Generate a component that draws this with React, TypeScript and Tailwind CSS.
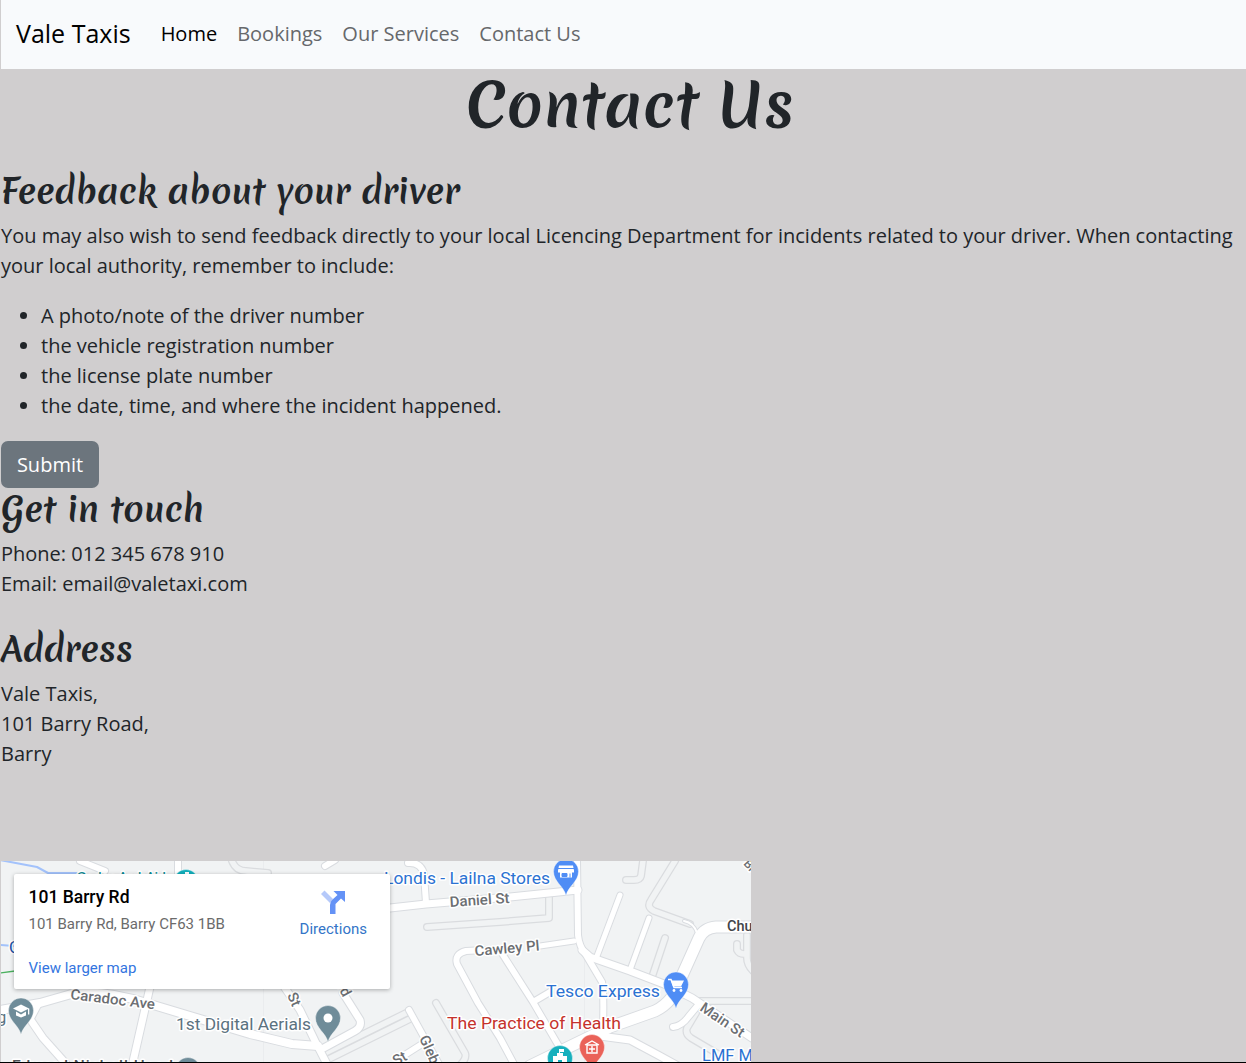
import React from "react";

const navLinks = ["Home", "Bookings", "Our Services", "Contact Us"];

const reminders = [
  "A photo/note of the driver number",
  "the vehicle registration number",
  "the license plate number",
  "the date, time, and where the incident happened.",
];

const lanes = [
  "M427 927L500 922L549 918V897",
  "M675 861L651 900Q646 907 654 911L690 924",
  "M643 861L641 876Q640 880 634 880H626",
  "M665 938L652 977",
  "M700 1001H752",
  "M696 1013L687 1028Q685 1034 691 1038L718 1054",
  "M737 944V950Q739 954 744 954M747 935V958Q747 965 753 971",
  "M325 1053L408 1012M329 1059L410 1019",
  "M436 1003L465 1053Q467 1058 461 1064",
  "M232 861Q236 871 246 871L268 873",
];

const roads: { d: string; w: number }[] = [
  { d: "M0 1010L40 1003L75 993Q108 990 150 1004L200 1019L250 1034L292 1044L318 1046", w: 8 },
  { d: "M38 1004L30 1019L43 1038L68 1066", w: 7 },
  { d: "M150 987L132 1066", w: 7 },
  { d: "M80 861L105 871M178 861V875M325 866L335 860", w: 6 },
  { d: "M408 863Q421 862 424 874L426 903", w: 6 },
  { d: "M390 908L426 904L510 897L578 890", w: 7 },
  { d: "M485 950L466 951Q454 954 457 964L478 1003L500 1038L515 1066", w: 6 },
  { d: "M503 955L533 1002L564 1055M533 1002L550 992", w: 6 },
  { d: "M540 946L574 941", w: 5 },
  { d: "M577 861L578 935Q579 946 586 955L602 982Q604 990 603 1030", w: 6 },
  { d: "M582 950L590 957L630 971L664 984L692 998L752 1038", w: 7 },
  { d: "M620 895L597 956M649 918L630 970", w: 5 },
  { d: "M752 927H716Q704 928 699 938L681 978Q674 1002 655 1011L610 1027L530 1066", w: 11 },
  { d: "M600 1036L630 1040L658 1055L678 1066", w: 7 },
  { d: "M673 1027Q682 1026 689 1016L699 1004", w: 6 },
  { d: "M684 921Q694 923 697 933", w: 2 },
  { d: "M283 985L300 1010L315 1041L328 1066M343 993L360 1020Q362 1027 355 1031L320 1050", w: 7 },
  { d: "M409 1010L440 1066M422 1044L400 1058", w: 6 },
];

function Pin({ x, y, color, children }: { x: number; y: number; color: string; children?: React.ReactNode }) {
  return (
    <g transform={`translate(${x} ${y})`}>
      <path d="M0 24C-2 15-12.500 10-12.500 0A12.500 12.500 0 0 1 12.500 0C12.500 10 2 15 0 24Z" fill={color} stroke="#fff" strokeOpacity=".4" />
      {children}
    </g>
  );
}

function MapDrawing() {
  return (
    <svg viewBox="1 861 750 201" className="block h-[201px] w-[750px]" fontFamily="Roboto, sans-serif">
      <rect x="1" y="861" width="750" height="201" fill="#f1f3f4" />
      <path d="M263.500 861V1062M584.500 950V1062" stroke="#eaecee" fill="none" />
      <g fill="none" strokeLinecap="round" strokeLinejoin="round">
        {lanes.map((d) => <path key={d} d={d} stroke="#dadcdf" strokeWidth="8" />)}
        {lanes.map((d) => <path key={d} d={d} stroke="#f1f3f4" strokeWidth="5.500" />)}
        {roads.map((r) => <path key={r.d} d={r.d} stroke="#d9dce0" strokeWidth={r.w + 2} />)}
        {roads.map((r) => <path key={r.d} d={r.d} stroke="#fff" strokeWidth={r.w} />)}
        <path d="M0 860L37 867L48 873H77M0 945L14 946" stroke="#a3c2fb" strokeWidth="2" />
        <path d="M0 973L15 971" stroke="#4bb15f" strokeWidth="1.300" />
      </g>

      <g stroke="#fff" strokeWidth="3" strokeLinejoin="round" paintOrder="stroke" fontSize="14.500" fill="#6b6e72" fontWeight="500">
        <text x="450" y="907" transform="rotate(-4 450 907)" textLength="60" lengthAdjust="spacingAndGlyphs">Daniel St</text>
        <text x="475" y="956" transform="rotate(-5 475 956)" textLength="65" lengthAdjust="spacingAndGlyphs">Cawley Pl</text>
        <text x="70" y="999" transform="rotate(7 70 999)" textLength="85" lengthAdjust="spacingAndGlyphs">Caradoc Ave</text>
        <text x="699" y="1010" transform="rotate(34 699 1010)" textLength="50" lengthAdjust="spacingAndGlyphs">Main St</text>
        <text x="287" y="995" transform="rotate(67 287 995)">St</text>
        <text x="337" y="986" transform="rotate(62 337 986)">rd</text>
        <text x="419" y="1038" transform="rotate(66 419 1038)">Glebe</text>
        <text x="396" y="1066" transform="rotate(-29 396 1066)">St</text>
        <text x="743" y="864" transform="rotate(48 743 864)" fontSize="12">Br</text>
        <text x="727" y="931" fill="#414448" fontSize="14.500">Church</text>
        <text x="12" y="1071" fill="#505357" fontSize="15.500" textLength="161">Edward Nicholl Head</text>
      </g>
      <g stroke="#fff" strokeWidth="3" strokeLinejoin="round" paintOrder="stroke" fontSize="16.500" fontWeight="400" fill="#2b72d2">
        <text x="384" y="884" textLength="166" lengthAdjust="spacingAndGlyphs">Londis - Lailna Stores</text>
        <text x="546" y="997" textLength="114" lengthAdjust="spacingAndGlyphs">Tesco Express</text>
        <text x="702" y="1061">LMF Motors</text>
        <text x="9" y="953" fill="#174ea6">C</text>
        <text x="76" y="884" fill="#0b8a93" textLength="90">Cadoc ArchAid</text>
        <text x="447" y="1029" fill="#c5322c" textLength="174" lengthAdjust="spacingAndGlyphs">The Practice of Health</text>
        <text x="176" y="1030" fill="#5b7280" textLength="135" lengthAdjust="spacingAndGlyphs">1st Digital Aerials</text>
        <text x="-3" y="1023" fill="#5b7280">g</text>
      </g>

      <Pin x={566} y={871.5} color="#4f8df5">
        <path d="M-7-6H7L8-1V1H-8V-1ZM-6 1V6H6V1" fill="#fff" />
        <path d="M-8-3H8M-4 2H1V5H-4ZM4 2V6" stroke="#4f8df5" strokeWidth="1" fill="#4f8df5" />
      </Pin>
      <Pin x={676} y={984.5} color="#4f8df5">
        <path d="M-8-5H-5L-2 3H6" stroke="#fff" strokeWidth="1.500" fill="none" />
        <path d="M-5-4H8L5 2H-3Z" fill="#fff" />
        <circle cx="-2" cy="6" r="1.400" fill="#fff" /><circle cx="5" cy="6" r="1.400" fill="#fff" />
      </Pin>
      <Pin x={328} y={1018} color="#6f8c99"><circle r="4.500" fill="#fff" /></Pin>
      <Pin x={21} y={1010.5} color="#6f8c99">
        <path d="M-8-2L0-6L8-2L0 2ZM-5 1V5L0 7L5 5V1L0 4ZM7-2H8.300V4H7Z" fill="#fff" />
      </Pin>
      <Pin x={592} y={1047} color="#ea6259">
        <path d="M-7-2L0-6L7-2M-5-2V6H5V-2ZM0-1V5M-3 2H3" stroke="#fff" strokeWidth="1.400" fill="none" />
      </Pin>
      <Pin x={560} y={1058} color="#18b0bd">
        <path d="M-7-2H-3V-5H-1V-9H4V-6H0V-5H3V-2H7V7H2V2H-2V7H-7Z" fill="#fff" />
      </Pin>
      <Pin x={186} y={882} color="#12aebb"><path d="M-1-10H3V-6H-1Z" fill="#fff" /></Pin>
      <Pin x={188} y={1070} color="#6f8c99" />
    </svg>
  );
}

function LocationMap() {
  return (
    <div className="relative h-[201px] w-[750px] overflow-hidden font-normal">
      <MapDrawing />
      <div className="absolute left-[13px] top-[13px] flex h-[115px] w-[376px] justify-between rounded-[2px] bg-white pl-[14.5px] pr-[23px] font-[Roboto,sans-serif] shadow-[0_1px_4px_rgba(0,0,0,0.3)]">
        <div className="flex flex-col whitespace-nowrap">
          <div className="mt-3 text-[17.500px] font-medium leading-[22px] text-black">101 Barry Rd</div>
          <div className="mt-[6px] text-[15px] leading-5 text-[#6b6b6b]">101 Barry Rd, Barry CF63 1BB</div>
          <a className="mt-6 text-[15px] leading-5 text-[#3375e0]">View larger map</a>
        </div>
        <div className="flex flex-col items-center pt-4">
          <svg viewBox="0 0 24 24" className="size-6">
            <path d="M0 4L3.500 .5L12 9L9 13Z" fill="#b5c9fa" />
            <path d="M9 24V15Q9 12 11 10L16.500 5L12.500 1H24V12L20 8.500L14.500 14V24Z" fill="#6492f6" />
          </svg>
          <a className="mt-[5px] text-[15px] leading-5 text-[#3375c8]">Directions</a>
        </div>
      </div>
    </div>
  );
}

function SectionTitle({ children }: { children: React.ReactNode }) {
  return (
    <h2 className="mb-[5px] whitespace-nowrap pt-[3px] font-[Merienda,Lato,sans-serif] text-[34px] font-bold leading-[48px] tracking-[-0.1px]">
      {children}
    </h2>
  );
}

export default function App() {
  return (
    <div className="flex h-[1063px] flex-col overflow-hidden border-b border-black bg-[#d0cecf] pl-px font-['Open_Sans',sans-serif] text-[20px] font-normal leading-[30px] text-[#212529]">
      <nav className="flex h-[69px] shrink-0 items-center bg-[#f8fafc] pb-[2px] pl-[15px]">
        <a className="mr-[30px] pb-[2px] text-[25px] leading-[36px] text-black">Vale Taxis</a>
        <div className="flex gap-5">
          {navLinks.map((link) => (
            <a key={link} className={link === "Home" ? "text-black" : "text-[#66686b]"}>{link}</a>
          ))}
        </div>
      </nav>
      <main className="flex flex-col">
        <h1 className="-mt-[6px] mb-2 ml-[13px] text-center font-[Merienda,Lato,sans-serif] text-[60px] font-bold leading-[84px] tracking-[0.1px]">Contact Us</h1>
        <section className="mt-[10px]">
          <SectionTitle>Feedback about your driver</SectionTitle>
          <p className="mb-5">You may also wish to send feedback directly to your local Licencing Department for incidents related to your driver. When contacting your local authority, remember to include:</p>
          <ul className="mb-5 list-disc pl-10">
            {reminders.map((item) => <li key={item}>{item}</li>)}
          </ul>
          <button className="block h-[47px] w-[98px] rounded-[7px] bg-[#6c757d] text-white">Submit</button>
        </section>
        <section className="-mt-[5px]">
          <SectionTitle>Get in touch</SectionTitle>
          <p>Phone: 012 345 678 910<br />Email: email@valetaxi.com</p>
        </section>
        <section className="mt-6">
          <SectionTitle>Address</SectionTitle>
          <address className="mb-[92px] not-italic">Vale Taxis,<br />101 Barry Road,<br />Barry</address>
        </section>
        <LocationMap />
      </main>
    </div>
  );
}
